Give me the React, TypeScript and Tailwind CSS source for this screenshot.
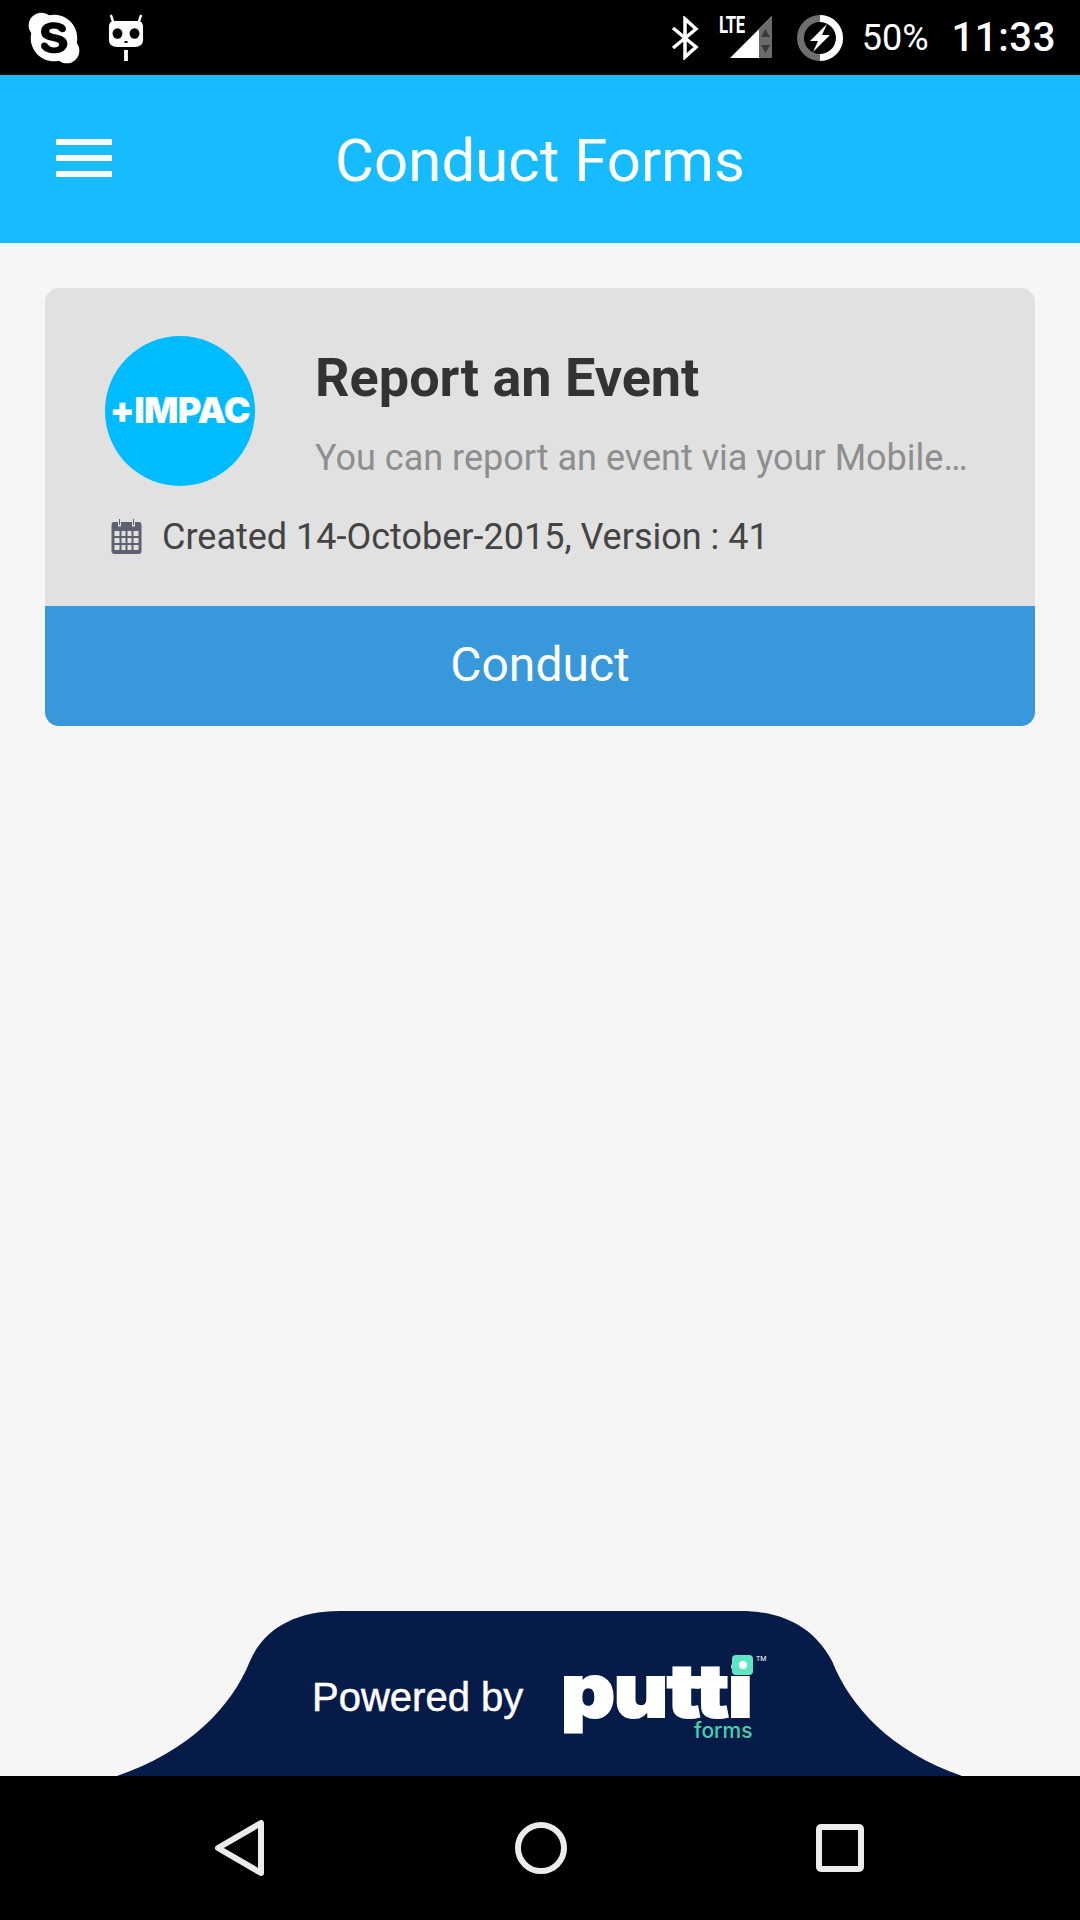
import { FaSkype } from "react-icons/fa";

function Cat() {
  return (
    <svg width="36" height="48" viewBox="0 0 38 48" preserveAspectRatio="none" fill="#fff">
      <path d="M7 12 L3 1 M31 12 L35 1" stroke="#fff" strokeWidth="2.5" fill="none" />
      <path d="M6 7 H32 Q37 7 37 13 V26 Q37 33 28 33 H10 Q1 33 1 26 V13 Q1 7 6 7 Z" />
      <circle cx="10" cy="19.5" r="5.2" fill="#000" />
      <circle cx="28" cy="19.5" r="5.2" fill="#000" />
      <ellipse cx="19" cy="28" rx="2" ry="1" fill="#000" />
      <rect x="17" y="36" width="4" height="11" />
    </svg>
  );
}

function Bluetooth() {
  return (
    <svg width="28" height="44" viewBox="0 0 28 44" fill="none" stroke="#fff" strokeWidth="3.5">
      <path d="M2 12 L25 31 L14 41 V3 L25 13 L2 32" />
    </svg>
  );
}

function Signal() {
  return (
    <div className="relative w-[53px] h-[44px]">
      <span className="absolute left-0 top-[-3px] text-[24px] leading-[24px] font-bold text-white font-['Roboto',sans-serif] scale-x-[0.7] origin-left tracking-tight">
        LTE
      </span>
      <svg className="absolute left-0 top-0" width="53" height="44" viewBox="0 0 53 44">
        <path d="M11 42 L53 0 V42 Z" fill="#fff" />
        <path d="M40 13 L53 0 V42 H40 Z" fill="#6b6b6b" />
        <path d="M46.5 13 L42 21 H51 Z M46.5 37 L42 29 H51 Z" fill="#3a3a3a" />
      </svg>
    </div>
  );
}

function Battery() {
  return (
    <svg width="46" height="46" viewBox="0 0 46 46">
      <circle cx="23" cy="23" r="19.5" fill="none" stroke="#6f6f6f" strokeWidth="7" />
      <path d="M23 3.5 A19.5 19.5 0 0 1 23 42.5" fill="none" stroke="#fff" strokeWidth="7" />
      <path d="M30 9 L13 26 H21 L16 37 L33 20 H25 Z" fill="#fff" />
    </svg>
  );
}

function Calendar() {
  return (
    <svg width="31" height="36" viewBox="0 0 30 36" className="mb-[3px]">
      <path fillRule="evenodd" fill="#5f6170" d="M2 4 H28 Q30 4 30 8 V33 Q30 36 27 36 H3 Q0 36 0 33 V8 Q0 4 2 4 Z M3 13 V18 H8 V13 Z M10 13 V18 H14 V13 Z M16 13 V18 H20 V13 Z M22 13 V18 H27 V13 Z M3 20 V25 H8 V20 Z M10 20 V25 H14 V20 Z M16 20 V25 H20 V20 Z M22 20 V25 H27 V20 Z M3 27 V32 H8 V27 Z M10 27 V32 H14 V27 Z M16 27 V32 H20 V27 Z M22 27 V32 H27 V27 Z" />
      <rect x="7" y="0" width="2" height="8" fill="#5f6170" stroke="#e0e0e0" strokeWidth="1" />
      <rect x="21" y="0" width="2" height="8" fill="#5f6170" stroke="#e0e0e0" strokeWidth="1" />
    </svg>
  );
}

export default function App() {
  return (
    <div className="w-[1080px] h-[1920px] flex flex-col bg-[#f6f6f7] font-['Roboto',sans-serif] overflow-hidden">
      <div className="h-[75px] bg-black flex items-center pl-[25px] pr-[24px] text-white">
        <FaSkype size={58} color="#fff" />
        <div className="ml-[25px]">
          <Cat />
        </div>
        <div className="ml-auto flex items-center">
          <Bluetooth />
          <div className="ml-[20px]">
            <Signal />
          </div>
          <div className="ml-[25px]">
            <Battery />
          </div>
          <span className="ml-[19px] text-[36px] leading-none">50%</span>
          <span className="ml-[23px] text-[40px] leading-none font-medium tracking-[0.6px]">11:33</span>
        </div>
      </div>

      <div className="h-[168px] bg-[#16bcff] relative flex items-center justify-center">
        <div className="absolute left-[56px] top-[64px] w-[56px] flex flex-col gap-[10px]">
          <div className="h-[6px] bg-white" />
          <div className="h-[6px] bg-white" />
          <div className="h-[6px] bg-white" />
        </div>
        <span className="text-[60px] leading-none text-white pt-[4px]">Conduct Forms</span>
      </div>

      <div className="flex-1 px-[45px] pt-[45px]">
        <div className="rounded-[14px] overflow-hidden">
          <div className="h-[318px] bg-[#e1e1e1] pt-[48px] pl-[60px] pr-[60px]">
            <div className="flex">
              <div className="w-[150px] h-[150px] rounded-full bg-[#00bcff] flex items-center justify-center shrink-0">
                <span className="text-[36px] leading-none font-black text-white font-['Inter',sans-serif] tracking-[-0.6px] pb-[3px]">+IMPAC</span>
              </div>
              <div className="ml-[60px] min-w-0 flex-1 pt-[12px]">
                <div className="text-[54px] leading-[60px] font-bold text-[#333333]">Report an Event</div>
                <div className="mt-[28px] text-[36px] leading-[44px] text-[#8e8e8e] whitespace-nowrap">
                  You can report an event via your Mobile…
                </div>
              </div>
            </div>
            <div className="flex items-center mt-[29px] pl-[6px]">
              <Calendar />
              <span className="ml-[20px] text-[36px] leading-[44px] text-[#444444]">Created 14-October-2015, Version : 41</span>
            </div>
          </div>
          <div className="h-[120px] bg-[#3898dc] flex items-center justify-center text-white text-[48px] leading-none pb-[3px]">
            Conduct
          </div>
        </div>
      </div>

      <div className="h-[165px] relative">
        <svg className="absolute left-0 top-0" width="1080" height="165" viewBox="0 0 1080 165">
          <path fill="#071b49" d="M117 165 C190 140 232 95 250 50 C264 18 295 0 340 0 H740 C785 0 815 18 832 50 C850 95 890 140 962 165 Z" />
        </svg>
        <div className="absolute inset-0">
          <span className="absolute left-[312px] top-[64px] text-[40px] leading-[44px] text-white font-['Liberation_Sans',sans-serif] [-webkit-text-stroke:0.5px_white]">Powered by</span>
          <span className="absolute left-[561px] top-[50px] text-[74px] leading-[58px] font-black text-white font-['Inter',sans-serif] scale-x-[1.13] origin-left tracking-[-1px] [-webkit-text-stroke:2px_white]">putti</span>
          <div className="absolute left-[732px] top-[44px] w-[21px] h-[20px] rounded-[4px] bg-[#5fe6c4] flex items-center justify-center">
            <div className="w-[8px] h-[8px] rounded-full bg-white" />
          </div>
          <span className="absolute left-[756px] top-[45px] text-[7px] leading-none text-white">TM</span>
          <span className="absolute left-[694px] top-[108px] text-[21px] leading-[24px] font-medium text-[#47cfae] font-['Inter',sans-serif]">forms</span>
        </div>
      </div>

      <div className="h-[144px] bg-black flex items-center justify-between pl-[213px] pr-[216px]">
        <svg width="52" height="58" viewBox="0 0 52 58" fill="none" stroke="#ececec" strokeWidth="6" strokeLinejoin="round">
          <path d="M48 4 V54 L5 29 Z" />
        </svg>
        <svg width="52" height="52" viewBox="0 0 52 52" fill="none" stroke="#ececec" strokeWidth="6">
          <circle cx="26" cy="26" r="23" />
        </svg>
        <svg width="48" height="48" viewBox="0 0 48 48" fill="none" stroke="#ececec" strokeWidth="6" strokeLinejoin="round">
          <rect x="3" y="3" width="42" height="42" rx="2" />
        </svg>
      </div>
    </div>
  );
}
